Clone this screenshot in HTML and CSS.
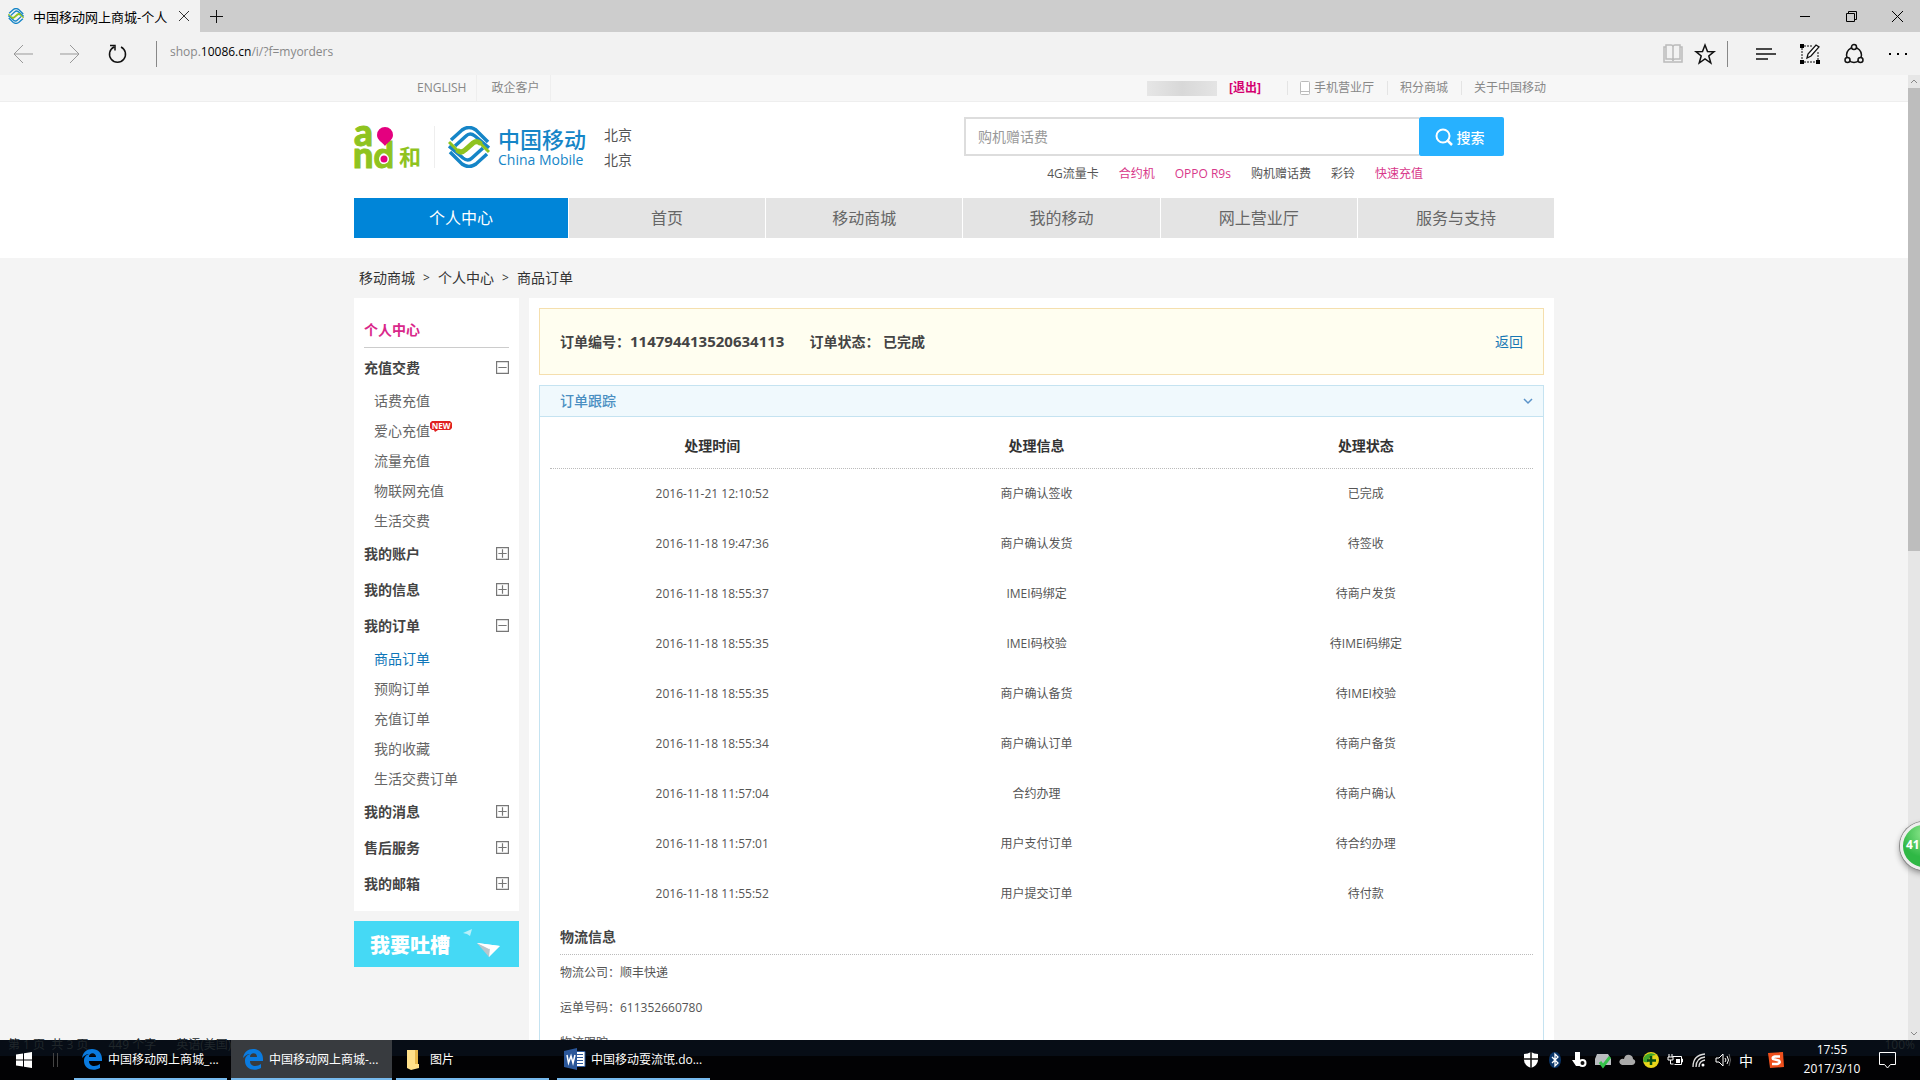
FILE: index.html
```html
<!DOCTYPE html>
<html lang="zh-CN">
<head>
<meta charset="utf-8">
<title>中国移动网上商城-个人中心</title>
<link rel="stylesheet" href="styles.css">
</head>
<body>
<svg class="defs" aria-hidden="true">
  <symbol id="cm" viewBox="0 0 42 42">
    <g fill="none" stroke-width="3.500">
      <g stroke="#1585c7"><path d="M3 14 14 4Q21 -1 28 4L40 16"/><path d="M7 20 18 10Q22 6 27 10L41 22"/><path d="M39 28 28 38Q21 43 14 38L2 26"/><path d="M35 22 24 32Q20 36 15 32L1 20"/></g>
      <path stroke="#8fc31f" stroke-width="5" d="M9 24Q13 28 17 24L25 17Q29 14 33 18"/>
      <path stroke="#8fc31f" stroke-width="3" d="M1 16 10 25M32 17 41 26"/>
    </g>
  </symbol>
  <symbol id="edge" viewBox="0 0 22 22"><path fill="#0a7be0" d="M1 10C2 4 6 1 11 1c6 0 10 4 10 10v2H8c0 6 7 6 11 3v4c-7 4-16 1-16-7 0-4 2-6 5-7-3 0-5 2-7 4Zm7-1h7c0-5-7-5-7 0Z"/></symbol>
  <symbol id="minus" viewBox="0 0 11 11"><path fill="none" stroke="#777" d="M.5.5h10v10H.5zM2 5.500h7"/></symbol>
  <symbol id="plus" viewBox="0 0 11 11"><path fill="none" stroke="#777" d="M.5.5h10v10H.5zM2 5.500h7M5.500 2v7"/></symbol>
</svg>
<div class="window">
  <header class="tabs">
    <div class="tab"><svg width="16" height="16"><use href="#cm"/></svg><span>中国移动网上商城-个人</span>
      <button class="bare" aria-label="关闭标签页"><svg width="10" height="10"><path stroke="#333" d="m0 0 10 10M10 0 0 10"/></svg></button></div>
    <button class="bare newtab" aria-label="新建标签页"><svg width="13" height="13"><path stroke="#111" d="M6.500 0v13M0 6.500h13"/></svg></button>
    <div class="winbtns">
      <button class="bare" aria-label="最小化"><svg width="10" height="10"><path stroke="#000" d="M0 5.500h10"/></svg></button>
      <button class="bare" aria-label="还原"><svg width="11" height="11"><path fill="none" stroke="#000" d="M.5 2.500h8v8h-8zM2.500 2.500v-2h8v8h-2"/></svg></button>
      <button class="bare" aria-label="关闭"><svg width="11" height="11"><path stroke="#000" d="m0 0 11 11M11 0 0 11"/></svg></button>
    </div>
  </header>
  <div class="toolbar">
    <button class="bare" aria-label="后退"><svg width="20" height="18"><path fill="none" stroke="#999" d="M20 9H1M10 0 1 9l9 9"/></svg></button>
    <button class="bare" aria-label="前进"><svg width="20" height="18"><path fill="none" stroke="#999" d="M0 9h19M10 0l9 9-9 9"/></svg></button>
    <button class="bare" aria-label="刷新"><svg width="20" height="20"><path fill="none" stroke="#111" stroke-width="1.500" d="M13 3a8 8 0 1 1-7 0M2 1.500h5v5"/></svg></button>
    <i class="rule"></i>
    <div class="url">shop.<b>10086.cn</b>/i/?f=myorders</div>
    <div class="small">
      <button class="bare" aria-label="阅读视图"><svg width="20" height="19"><path fill="none" stroke="#bbb" stroke-width="1.500" d="M1 3h2V1h5q2 0 2 2 0-2 2-2h5v2h2v15H1zM3 3v12h5q2 0 2 2 0-2 2-2h5V3M10 3v14"/></svg></button>
      <button class="bare" aria-label="收藏"><svg width="20" height="20"><path fill="none" stroke="#111" stroke-width="1.500" d="m10 1 2.500 6.500 6.500.2-5.200 4.200L15.800 19 10 15l-5.800 4 2-7.100L1 7.700l6.500-.2z"/></svg></button>
    </div>
    <i class="rule"></i>
    <div class="big">
      <button class="bare" aria-label="中心"><svg width="20" height="14"><path stroke="#111" stroke-width="1.500" d="M0 2h16M0 7h20M0 12h12"/></svg></button>
      <button class="bare" aria-label="做笔记"><svg width="20" height="20"><path fill="none" stroke="#111" stroke-dasharray="2 1" d="M4 2h8M2 4v12M4 18h12M18 8v8"/><path d="M0 0h4v4H0zM0 16h4v4H0zM16 16h4v4h-4z"/><path fill="#fff" stroke="#111" stroke-width="1.300" d="m7 14 1-4 8-9 3 2-8 9z"/></svg></button>
      <button class="bare" aria-label="共享"><svg width="20" height="20"><g fill="#f2f2f2" stroke="#111" stroke-width="1.500"><circle cx="10" cy="11" r="7.500"/><circle cx="10" cy="3" r="2.500"/><circle cx="3.500" cy="16" r="2.500"/><circle cx="16.500" cy="16" r="2.500"/></g></svg></button>
      <button class="bare" aria-label="更多"><svg width="18" height="4"><path d="M0 1h2v2H0zM8 1h2v2H8zM16 1h2v2h-2z"/></svg></button>
    </div>
  </div>
  <div class="view">
    <div class="page">
      <div class="topbar"><div class="wrap">
        <nav class="tl"><a href="#">ENGLISH</a><a href="#">政企客户</a></nav>
        <nav class="tr"><span class="masked"></span><a class="logout" href="#">[退出]</a><a href="#"><svg width="10" height="14"><rect x=".5" y=".5" width="9" height="13" rx="1" fill="#fff" stroke="#bbb"/><path stroke="#bbb" d="M1 10.500h8"/></svg>手机营业厅</a><a href="#">积分商城</a><a href="#">关于中国移动</a></nav>
      </div></div>
      <div class="head">
        <div class="wrap brand">
          <a class="and" href="#" aria-label="and 和"><svg width="68" height="44" viewBox="0 0 68 44"><g fill="#8fc31f" font-family="Lato, sans-serif" font-weight="900"><text x="0" y="20" font-size="37" stroke="#8fc31f">a</text><text x="-1" y="42" font-size="36" stroke="#8fc31f">nd</text><text x="45" y="39" font-size="22" font-weight="700" font-family="Noto Sans CJK SC, sans-serif">和</text></g><path fill="#e4007f" d="M31 20c-3-4-8-6-8-11a8 8 0 0 1 16 0c0 5-5 7-8 11Z"/><circle cx="30" cy="33" r="5" fill="#fff"/><circle cx="30" cy="33" r="3.500" fill="#e4007f"/></svg></a>
          <a class="mobile" href="#"><svg width="42" height="42"><use href="#cm"/></svg><span><b>中国移动</b><em>China Mobile</em></span></a>
          <div class="city"><span>北京</span><span>北京</span></div>
          <form class="search">
            <div class="box"><input type="text" aria-label="搜索商品" placeholder="购机赠话费"><button type="button"><svg width="18" height="18"><circle cx="8" cy="8" r="6.500" fill="none" stroke="#fff" stroke-width="2"/><path stroke="#fff" stroke-width="2.500" d="m12 12 5 5"/></svg>搜索</button></div>
            <div class="hot"><a href="#">4G流量卡</a><a class="pink" href="#">合约机</a><a class="pink" href="#">OPPO R9s</a><a href="#">购机赠话费</a><a href="#">彩铃</a><a class="pink" href="#">快速充值</a></div>
          </form>
        </div>
        <nav class="wrap mainnav"><a class="on" href="#">个人中心</a><a href="#">首页</a><a href="#">移动商城</a><a href="#">我的移动</a><a href="#">网上营业厅</a><a href="#">服务与支持</a></nav>
      </div>
      <div class="wrap crumbs"><a href="#">移动商城</a><i>&gt;</i><a href="#">个人中心</a><i>&gt;</i><span>商品订单</span></div>
      <div class="wrap body">
        <aside>
          <div class="menu">
            <h2>个人中心</h2>
            <h3>充值交费<svg width="13" height="13"><use href="#minus"/></svg></h3>
            <ul><li><a href="#">话费充值</a></li><li><a href="#">爱心充值</a><svg class="new" width="22" height="11"><path fill="#e02020" d="M2 0h18l2 2v5l-2 2H8l-3 2-1-2H2L0 7V2z"/><text x="11" y="8" text-anchor="middle" font-size="8" font-weight="700" fill="#fff">NEW</text></svg></li><li><a href="#">流量充值</a></li><li><a href="#">物联网充值</a></li><li><a href="#">生活交费</a></li></ul>
            <h3>我的账户<svg width="13" height="13"><use href="#plus"/></svg></h3>
            <h3>我的信息<svg width="13" height="13"><use href="#plus"/></svg></h3>
            <h3>我的订单<svg width="13" height="13"><use href="#minus"/></svg></h3>
            <ul><li><a class="on" href="#">商品订单</a></li><li><a href="#">预购订单</a></li><li><a href="#">充值订单</a></li><li><a href="#">我的收藏</a></li><li><a href="#">生活交费订单</a></li></ul>
            <h3>我的消息<svg width="13" height="13"><use href="#plus"/></svg></h3>
            <h3>售后服务<svg width="13" height="13"><use href="#plus"/></svg></h3>
            <h3>我的邮箱<svg width="13" height="13"><use href="#plus"/></svg></h3>
          </div>
          <a class="vent" href="#">我要吐槽<svg width="38" height="30"><path fill="#b8f0fa" d="m0 4 9-4-2 7-3-2z"/><path fill="#fff" d="m14 14 23 3-11 11-2-7z"/><path fill="#b9c6cc" d="m14 14 12 14 1-9z"/><path fill="#fff" d="m14 14 23 3-11 3z"/></svg></a>
        </aside>
        <main>
          <div class="notice"><strong>订单编号：<b>114794413520634113</b></strong><strong>订单状态： 已完成</strong><a href="#">返回</a></div>
          <section class="track">
            <h2>订单跟踪<svg width="10" height="7"><path fill="none" stroke="#5b93c9" stroke-width="1.500" d="m1 1 4 4 4-4"/></svg></h2>
            <table>
              <thead><tr><th>处理时间</th><th>处理信息</th><th>处理状态</th></tr></thead>
              <tbody>
                <tr><td>2016-11-21 12:10:52</td><td>商户确认签收</td><td>已完成</td></tr>
                <tr><td>2016-11-18 19:47:36</td><td>商户确认发货</td><td>待签收</td></tr>
                <tr><td>2016-11-18 18:55:37</td><td>IMEI码绑定</td><td>待商户发货</td></tr>
                <tr><td>2016-11-18 18:55:35</td><td>IMEI码校验</td><td>待IMEI码绑定</td></tr>
                <tr><td>2016-11-18 18:55:35</td><td>商户确认备货</td><td>待IMEI校验</td></tr>
                <tr><td>2016-11-18 18:55:34</td><td>商户确认订单</td><td>待商户备货</td></tr>
                <tr><td>2016-11-18 11:57:04</td><td>合约办理</td><td>待商户确认</td></tr>
                <tr><td>2016-11-18 11:57:01</td><td>用户支付订单</td><td>待合约办理</td></tr>
                <tr><td>2016-11-18 11:55:52</td><td>用户提交订单</td><td>待付款</td></tr>
              </tbody>
            </table>
            <div class="ship"><h3>物流信息</h3><p>物流公司：顺丰快递</p><p>运单号码：611352660780</p><p>物流跟踪</p></div>
          </section>
        </main>
      </div>
    </div>
    <div class="scroll"><svg width="12" height="13"><path fill="none" stroke="#888" d="m3 8 3-3 3 3"/></svg><i></i><svg class="down" width="12" height="13"><path fill="none" stroke="#888" d="m3 5 3 3 3-3"/></svg></div>
    <div class="ball">41</div>
  </div>
  <footer class="taskbar">
    <div class="ghost"><span>第 1 页&nbsp; 共 3 页</span><span>449 个字</span><span>英语(美国)</span><span class="pct">100%</span></div>
    <button class="bare start" aria-label="开始"><svg width="16" height="16"><path fill="#fff" d="M0 2.500 7 1.500v6H0zM8 1.300 16 0v7.500H8zM0 8.500h7v6l-7-1zM8 8.500h8V16l-8-1.300z"/></svg></button>
    <i class="grip"></i>
    <button class="task"><svg width="22" height="22"><use href="#edge"/></svg>中国移动网上商城_...</button>
    <button class="task active"><svg width="22" height="22"><use href="#edge"/></svg>中国移动网上商城-...</button>
    <button class="task"><svg width="22" height="22"><path fill="#e8b84c" d="M4 2h11v18H4z"/><path fill="#ffe08a" d="M4 2h8v14h4v4l-8 2-4-2z"/></svg>图片</button>
    <button class="task"><svg width="22" height="22"><path fill="#fff" stroke="#2b579a" d="M10 3.500h11v15H10z"/><path stroke="#2b579a" d="M12 6.500h7M12 9.500h7M12 12.500h7M12 15.500h7"/><path fill="#2b579a" d="m0 3 13-3v22L0 19z"/><path fill="none" stroke="#fff" stroke-width="1.500" d="m3 7 1.500 8L7 8l2 7 2-8"/></svg>中国移动耍流氓.do...</button>
    <div class="tray">
      <svg width="16" height="16"><path fill="#fff" d="M1 2q4 0 7-2 3 2 7 2v6q0 5-7 8-7-3-7-8z"/><path stroke="#111" stroke-width="1.500" d="M8 0v16M0 7h16"/></svg>
      <svg width="16" height="16"><ellipse cx="8" cy="8" rx="6" ry="8" fill="#0a3568"/><path fill="none" stroke="#fff" stroke-width="1.300" d="m5 5 6 6-3 3V2l3 3-6 6"/></svg>
      <svg width="16" height="16"><path fill="#fff" d="M4 0h5v8H4zM1 8h8v6H5z"/><circle cx="11.500" cy="11" r="3" fill="#111" stroke="#fff" stroke-width="2"/></svg>
      <svg width="16" height="16"><path fill="#b9bcc0" d="m2 2h11l3 5v6H0V7z"/><path fill="none" stroke="#35c24a" stroke-width="3" d="m5 10 3 4 7-9"/></svg>
      <svg width="16" height="16"><path fill="#aaa" d="M3 13q-4-2-2-5 2-2 4-1 1-5 6-4 3 1 3 4 3 1 2 4-1 2-3 2z"/></svg>
      <svg width="16" height="16"><circle cx="8" cy="8" r="8" fill="#e8d51a"/><path fill="#41a62a" d="M0 9a8 8 0 0 1 13-6q-7 0-8 7-3 1-5-1Z"/><path stroke="#064d12" stroke-width="2.500" d="M8 4v9M4 8.500h9"/></svg>
      <svg width="16" height="16"><path fill="none" stroke="#fff" d="M5.500 4.500h9v8h-7M14.500 7h1v3h-1M1 5h5v3H1zM2 2v3M5 2v3M3.500 8v4h3"/><path fill="#fff" d="M9 7h4v4H9z"/></svg>
      <svg width="16" height="16"><path fill="none" stroke="#ddd" stroke-width="1.300" d="M2 15Q2 3 14 2M5 15Q5 6 14 5M8 15Q8 9 14 8"/><circle cx="12" cy="13" r="1.500" fill="#fff"/></svg>
      <svg width="16" height="16"><path fill="none" stroke="#fff" d="M1 6h3l4-4v12l-4-4H1zM10 6q2 2 0 4M12 4q3 4 0 8"/><path fill="none" stroke="#666" d="M14 2q3 6 0 12"/></svg>
      <span class="ime">中</span>
      <svg class="sogou" width="16" height="16"><path fill="#ee4f1c" d="m0 1 15-1 1 15-14 1z"/><path fill="none" stroke="#fff" stroke-width="2.500" d="M12 4.500H7Q4 5 5 7l6 1.500Q13 11 9 12H4"/></svg>
    </div>
    <div class="clock"><span>17:55</span><span>2017/3/10</span></div>
    <button class="bare action" aria-label="操作中心"><svg width="17" height="17"><path fill="none" stroke="#fff" d="M.5.500h16v12h-5l-3 3.500-3-3.500h-5z"/></svg></button>
  </footer>
</div>
</body>
</html>
```
FILE: styles.css
```css
* { box-sizing: border-box; }
body { margin: 0; font: 12px "Open Sans", "Noto Sans CJK SC", sans-serif; color: #555; }
a { color: inherit; text-decoration: none; }
h2, h3, p, ul { margin: 0; padding: 0; list-style: none; font-size: 14px; }
i, em { font-style: normal; }
svg { flex: none; display: block; overflow: visible; }
button, input { font: inherit; }
.defs { display: none; }
.bare { border: 0; padding: 0; background: none; display: flex; align-items: center; justify-content: center; }

/* browser window */
.window { height: 100vh; display: flex; flex-direction: column; overflow: hidden; }
.tabs { flex: none; height: 32px; display: flex; background: #cdcdcd; }
.tab { width: 200px; padding: 0 11px 0 8px; display: flex; align-items: center; gap: 9px; background: #f2f2f2; color: #000; font-size: 13px; white-space: nowrap; }
.tab button { margin-left: auto; }
.newtab { width: 32px; }
.winbtns { margin-left: auto; display: flex; }
.winbtns button { width: 46px; }
.toolbar { flex: none; height: 43px; display: flex; align-items: center; background: #f2f2f2; }
.toolbar > button { width: 48px; }
.toolbar > button:first-child { width: 46px; }
.toolbar > .rule { width: 1px; height: 26px; background: #888; margin: 0 13px 0 14px; }
.url { flex: 1; color: #888; line-height: 20px; margin-bottom: 3px; }
.url b { font-weight: 400; color: #000; }
.small, .big { display: flex; }
.small button { width: 32px; }
.big button { width: 44px; }
.toolbar > .small + .rule { margin: 0 16px 0 6px; }

.view { flex: 1; min-height: 0; display: flex; position: relative; overflow: hidden; }
.page { flex: 1; background: #f4f4f4; }
.scroll { width: 12px; background: #e6e6e6; display: flex; flex-direction: column; }
.scroll i { height: 48%; background: #bdbdbd; }
.scroll .down { margin-top: auto; }
.ball { position: absolute; right: -28px; bottom: 170px; width: 48px; height: 48px; border: 3px solid #eee; border-radius: 50%; background: radial-gradient(circle at 50% 20%, #8ce68c, #2fb845 60%); box-shadow: 0 0 0 1px #888, 0 3px 6px #888; color: #fff; font-weight: 700; line-height: 40px; padding-left: 3px; }

/* site header */
.wrap { width: 100%; max-width: 1200px; margin: 0 auto; }
.topbar { background: #f7f7f7; border-bottom: 1px solid #eee; color: #888; line-height: 26px; }
.topbar .wrap { display: flex; justify-content: space-between; }
.tl, .tr { display: flex; align-items: center; }
.tl { padding-left: 51px; }
.tl a { padding: 0 10px 0 14px; border-right: 1px solid #eee; }
.tl a:first-child { padding-left: 12px; }
.tr a { padding: 0 13px 0 12px; border-left: 1px solid #e4e4e4; line-height: 14px; display: flex; gap: 4px; }
.tr a:last-child { padding-right: 8px; }
.tr .logout { border: 0; padding-right: 26px; color: #d4006f; font-weight: 700; }
.masked { width: 70px; height: 15px; background: linear-gradient(90deg, #e6e6e6, #d8d8d8 50%, #e4e4e4); }
.head { background: #fff; padding-bottom: 20px; }
.brand { display: flex; height: 96px; padding: 15px 50px 0 0; }
.and { margin-top: 9px; width: 80px; height: 44px; }
.mobile { display: flex; gap: 8px; margin-top: 9px; padding-left: 13px; height: 42px; border-left: 1px solid #eee; color: #1585c7; }
.mobile span { display: flex; flex-direction: column; }
.mobile b { font-size: 22px; line-height: 26px; font-weight: 500; }
.mobile em { font: 14px/16px "Open Sans", sans-serif; }
.city { display: flex; flex-direction: column; margin: 5px 0 0 18px; font-size: 14px; line-height: 25px; }
.search { margin-left: auto; width: 540px; }
.box { display: flex; height: 39px; }
.box input { flex: 1; border: 2px solid #ddd; border-right: 0; padding: 0 12px; font-size: 14px; outline: 0; }
.box input::placeholder { color: #999; }
.box button { width: 85px; border: 0; border-radius: 2px; background: #27b1ff; color: #fff; font-size: 14px; font-weight: 500; padding: 0 4px 0 0; display: flex; align-items: center; justify-content: center; gap: 4px; }
.hot { display: flex; gap: 20px; justify-content: flex-end; padding-right: 81px; line-height: 36px; }
.pink { color: #d8388a; }
.mainnav { display: grid; grid-template-columns: 214px repeat(5, 1fr); gap: 1px; text-align: center; font-size: 16px; line-height: 40px; }
.mainnav a { background: #e4e4e4; color: #666; }
.mainnav .on { background: #0085d8; color: #fff; }
.crumbs { display: flex; padding-left: 5px; font-size: 14px; line-height: 40px; color: #333; }
.crumbs i { width: 23px; text-align: center; font-size: 12px; }

/* side menu */
.body { display: flex; gap: 10px; align-items: flex-start; }
aside { width: 165px; flex: none; }
.menu { background: #fff; padding: 15px 10px 9px; }
.menu h2 { line-height: 34px; border-bottom: 1px solid #ccc; margin-bottom: 2px; color: #d9278a; }
.menu h3 { display: flex; justify-content: space-between; align-items: center; line-height: 36px; color: #444; }
.menu h3 svg { margin-bottom: 2px; }
.menu li { display: flex; line-height: 30px; padding-left: 10px; color: #666; }
.menu .on { color: #0e76b8; }
.new { margin-top: 5px; }
.vent { margin-top: 10px; height: 46px; background: #45d9f5; color: #fff; font-size: 20px; font-weight: 900; display: flex; align-items: center; padding: 0 18px 0 16px; justify-content: space-between; }

/* order details */
main { flex: 1; background: #fff; padding: 10px; }
.notice { display: flex; align-items: center; gap: 25px; height: 67px; padding: 0 20px 2px; background: #fffef0; border: 1px solid #f5dfae; font-size: 14px; color: #444; }
.notice b { font-size: 15px; font-weight: 700; }
.notice a { margin-left: auto; color: #1877b4; }
.track { margin-top: 10px; border: 1px solid #c5e3f1; }
.track h2 { display: flex; justify-content: space-between; align-items: center; padding: 0 10px 0 20px; line-height: 30px; background: #f0f9fd; border-bottom: 1px solid #c5e3f1; color: #4a8fc2; font-weight: 500; }
table { width: calc(100% - 20px); margin-left: 10px; border-collapse: separate; border-spacing: 0; table-layout: fixed; text-align: center; }
th { height: 52px; padding: 4px 0 0; border-bottom: 1px dotted #bbb; font-size: 14px; color: #333; }
th:first-child, th:nth-child(2) { width: 33%; }
td { height: 50px; padding: 0 0 2px; }
.ship { margin: 0 10px 0 20px; }
.ship h3 { line-height: 35px; border-bottom: 1px dotted #bbb; color: #444; }
.ship p { line-height: 35px; font-size: 12px; }

/* desktop taskbar */
.taskbar { flex: none; height: 40px; display: flex; position: relative; background: linear-gradient(#070d16 16px, #020204 16px); color: #fff; }
.ghost { position: absolute; inset: -4px 5px auto 8px; display: flex; gap: 20px; color: #20272b; line-height: 18px; }
.pct { margin-left: auto; }
.start { width: 48px; }
.grip { width: 5px; height: 14px; margin: 13px 12px 0 5px; border: 1px solid #444; border-width: 0 1px; }
.task { width: 153px; margin: 0 4px; padding: 0 0 0 7px; border: 0; border-bottom: 2px solid #76b9ed; background: none; color: #fff; display: flex; align-items: center; gap: 5px; white-space: nowrap; position: relative; }
.task.active { width: 161px; margin: 0; padding-left: 11px; background: #383b3f; }
.tray { margin-left: auto; display: flex; align-items: center; }
.tray > * { margin: 0 4px; }
.ime { font-size: 14px; }
.tray .sogou { margin: 0 14px 0 11px; }
.clock { width: 68px; margin-right: 5px; display: flex; flex-direction: column; align-items: center; line-height: 19px; }
.action { width: 32px; margin: 0 17px 0 0; }
```
